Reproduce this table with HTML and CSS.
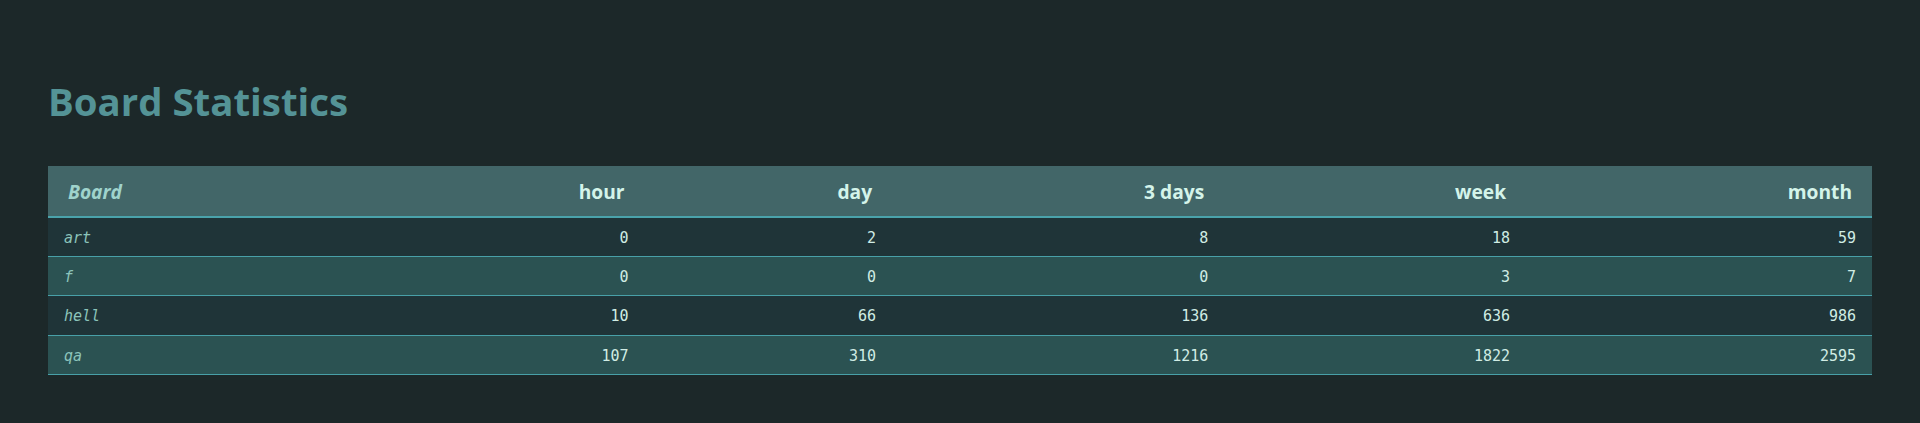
FILE: index.html
```html
<!DOCTYPE html>
<html lang="en">
<head>
<meta charset="utf-8">
<title>Board Statistics</title>
<link rel="stylesheet" href="styles.css">
</head>
<body>
<main class="page">
  <h1 class="title">Board Statistics</h1>
  <table class="stats">
    <thead>
      <tr>
        <th class="board-head">Board</th>
        <th>hour</th>
        <th>day</th>
        <th>3 days</th>
        <th>week</th>
        <th>month</th>
      </tr>
    </thead>
    <tbody>
      <tr>
        <td class="board">art</td>
        <td>0</td><td>2</td><td>8</td><td>18</td><td>59</td>
      </tr>
      <tr>
        <td class="board">f</td>
        <td>0</td><td>0</td><td>0</td><td>3</td><td>7</td>
      </tr>
      <tr>
        <td class="board">hell</td>
        <td>10</td><td>66</td><td>136</td><td>636</td><td>986</td>
      </tr>
      <tr>
        <td class="board">qa</td>
        <td>107</td><td>310</td><td>1216</td><td>1822</td><td>2595</td>
      </tr>
    </tbody>
  </table>
</main>
</body>
</html>
```

FILE: styles.css
```css
html, body {
  margin: 0;
  padding: 0;
  background: #1c2829;
  height: 100%;
}

.page {
  padding: 75px 48px 0;
  font-family: "Open Sans", "Noto Sans", sans-serif;
}

.title {
  margin: 0 0 39px;
  font-size: 38.4px;
  font-weight: 700;
  line-height: normal;
  color: #549396;
}

.stats {
  width: 100%;
  border-collapse: collapse;
  border-spacing: 0;
}

.stats th {
  background: #426668;
  color: #d4f4ea;
  font-family: "Open Sans", "Noto Sans", sans-serif;
  font-size: 19.2px;
  font-weight: 700;
  line-height: 25.7px;
  text-align: right;
  padding: 13px 20px 11px;
  border-bottom: 2px solid #4aa3ab;
}

.stats th.board-head {
  text-align: left;
  font-style: italic;
  color: #9fd3cc;
}

.stats td {
  font-family: "DejaVu Sans Mono", "Liberation Mono", monospace;
  font-size: 15px;
  line-height: 18.33px;
  color: #d0ece4;
  text-align: right;
  padding: 11px 16px 9px;
  border-bottom: 1px solid #48a0a8;
}

.stats td.board {
  text-align: left;
  font-style: italic;
  color: #8cc4bb;
}

.stats tbody tr:nth-child(odd) td {
  background: #1f3438;
}

.stats tbody tr:nth-child(even) td {
  background: #2b5252;
}
```
